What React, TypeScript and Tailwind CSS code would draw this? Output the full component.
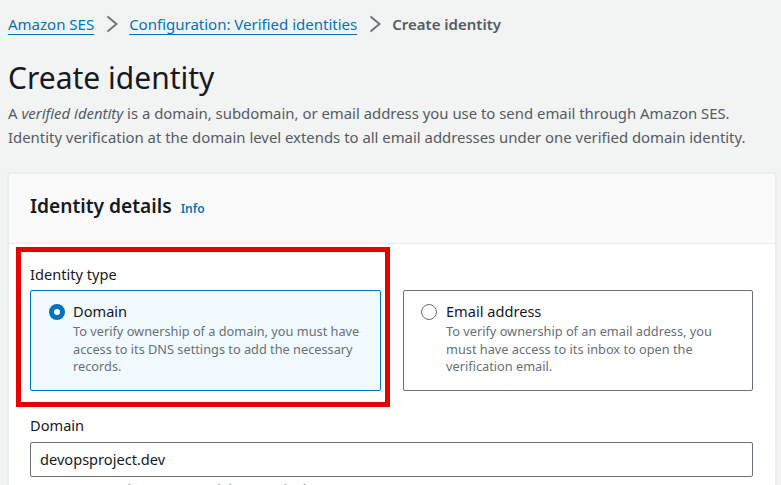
import React from 'react';

function Crumb({ children }: { children: React.ReactNode }) {
  return <a className="text-[#0073bb] underline underline-offset-[4px] decoration-1">{children}</a>;
}

function Chevron() {
  return (
    <svg viewBox="0 0 12 18" className="w-[12px] h-[18px] ml-[12px] mr-[11px]" fill="none" stroke="#687078" strokeWidth="1.8">
      <path d="M1.5 1.5 L10.5 9 L1.5 16.5" />
    </svg>
  );
}

function TypeCard({ title, desc, selected }: { title: string; desc: React.ReactNode; selected?: boolean }) {
  return (
    <div
      className={
        'flex-1 h-[101px] rounded-[2px] border pt-[10px] flex ' +
        (selected ? 'pl-[18px] gap-[8px] bg-[#f1faff] border-[#0073bb]' : 'pl-[17px] gap-[9px] bg-white border-[#687078]')
      }
    >
      {selected ? (
        <span className="mt-[3px] w-[16px] h-[16px] rounded-full border-[5px] border-[#0073bb] bg-white shrink-0" />
      ) : (
        <span className="mt-[3px] w-[16px] h-[16px] rounded-full border border-[#687078] bg-white shrink-0" />
      )}
      <div className="min-w-0">
        <div className="text-[14.6px] leading-[20px] text-[#16191f]">{title}</div>
        <div className="text-[12.75px] leading-[17.5px] text-[#687078] mt-[2px] whitespace-nowrap">{desc}</div>
      </div>
    </div>
  );
}

export default function App() {
  return (
    <div
      className="w-[781px] h-[485px] overflow-hidden bg-[#f2f3f3] pl-[8px] text-[#16191f]"
      style={{ fontFamily: '"Noto Sans", "Open Sans", sans-serif' }}
    >
      {/* Breadcrumbs */}
      <nav className="flex items-center h-[20px] mt-[14px] text-[15px] leading-[20px]">
        <Crumb>Amazon SES</Crumb>
        <Chevron />
        <Crumb>Configuration: Verified identities</Crumb>
        <Chevron />
        <span className="font-semibold text-[#545b64]">Create identity</span>
      </nav>

      <h1 className="mt-[24px] text-[30px] leading-[40px] font-normal">Create identity</h1>
      <p className="mt-[3px] text-[14.9px] leading-[24px] text-[#545b64] whitespace-nowrap">
        A <i>verified identity</i> is a domain, subdomain, or email address you use to send email through Amazon SES.
        <br />
        Identity verification at the domain level extends to all email addresses under one verified domain identity.
      </p>

      {/* Card */}
      <section className="mt-[24px] w-[768px] bg-white border-l border-r border-t border-[#eaeded] shadow-[0_0_1px_rgba(0,0,0,0.15)]">
        <header className="h-[70px] bg-[#fafafa] border-b border-[#eaeded] pl-[21px] flex items-center">
          <h2 className="mb-[6px] text-[19.2px] leading-[24px] font-semibold">Identity details</h2>
          <a className="ml-[9px] mt-[1px] text-[12px] font-semibold text-[#0073bb]">Info</a>
        </header>

        <div className="pl-[21px] pr-[22px] relative">
          <div className="pt-[20px] text-[14.6px] leading-[20px] text-[#16191f]">Identity type</div>
          <div className="mt-[6px] flex gap-[22px]">
            <TypeCard
              selected
              title="Domain"
              desc={
                <>
                  To verify ownership of a domain, you must have
                  <br />
                  access to its DNS settings to add the necessary
                  <br />
                  records.
                </>
              }
            />
            <TypeCard
              title="Email address"
              desc={
                <>
                  To verify ownership of an email address, you
                  <br />
                  must have access to its inbox to open the
                  <br />
                  verification email.
                </>
              }
            />
          </div>

          <div className="mt-[24px] text-[14.6px] leading-[20px]">Domain</div>
          <div className="mt-[7px] h-[35px] rounded-[2px] border border-[#687078] flex items-center pl-[9px] text-[14.6px]">
            devopsproject.dev
          </div>
          <div className="mt-[4px] text-[12.8px] leading-[16px] text-[#687078] whitespace-nowrap">
            Enter a name using up to 253 alphanumeric characters.
          </div>

          {/* Annotation drawn over the form */}
          <div className="absolute left-[7px] top-[3px] w-[374px] h-[160px] border-[5px] border-[#e60000] pointer-events-none" />
        </div>
      </section>
    </div>
  );
}
